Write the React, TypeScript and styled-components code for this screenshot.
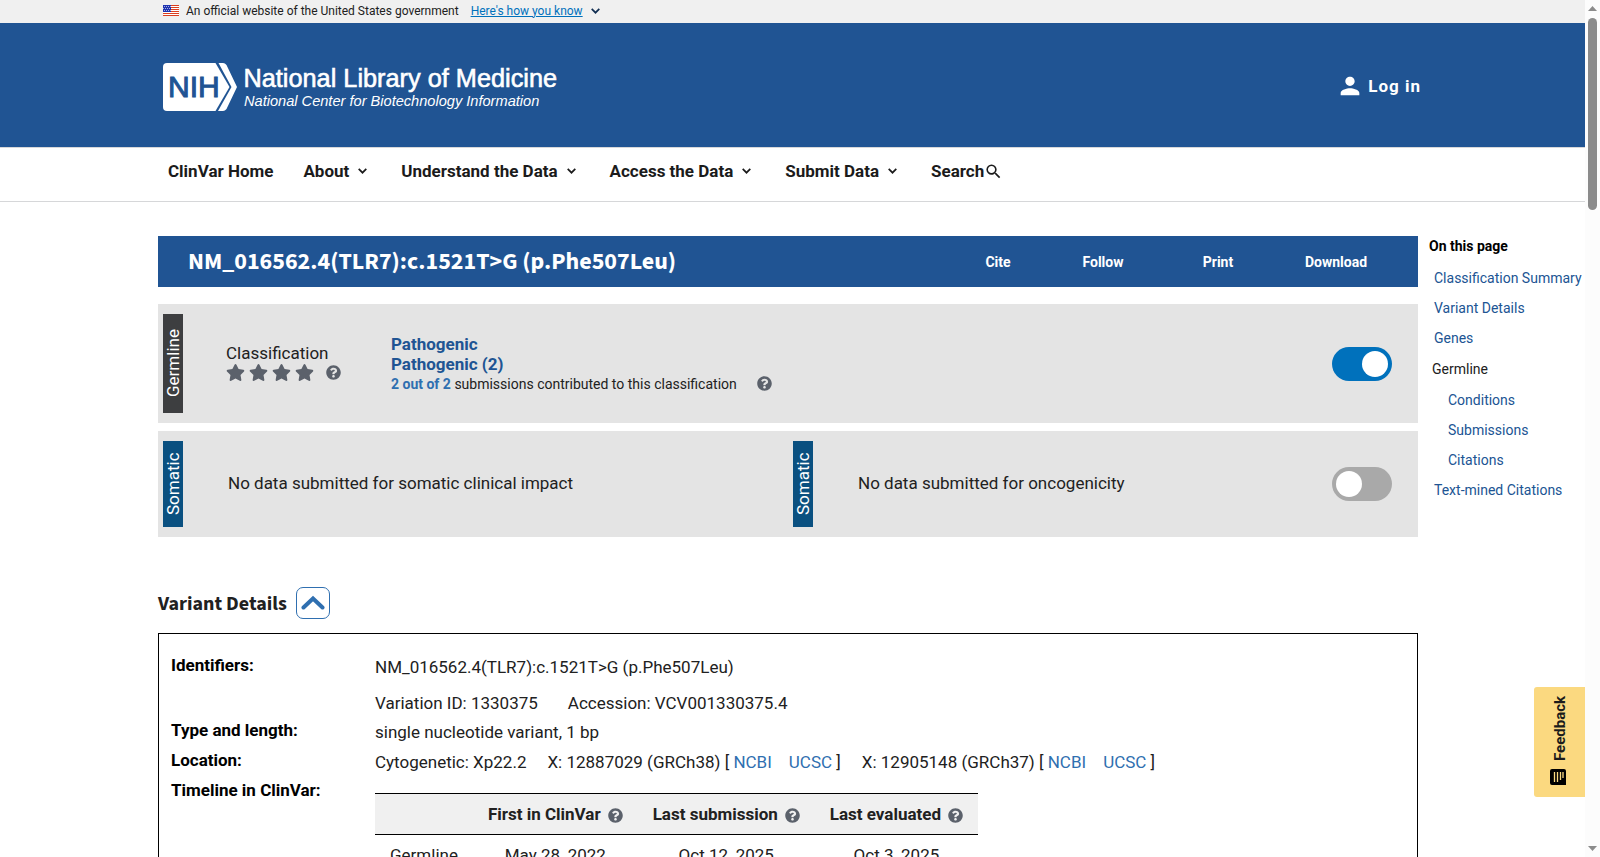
import React from "react";
import styled, { createGlobalStyle, css } from "styled-components";
import { FaQuestionCircle, FaStar } from "react-icons/fa";
import { MdPerson, MdSearch } from "react-icons/md";

const GlobalStyle = createGlobalStyle`
  * { box-sizing: border-box; }
  body {
    margin: 0;
    background: #fff;
    color: #212121;
    font-family: Roboto, "Liberation Sans", sans-serif;
    font-size: 17px;
    line-height: 20px;
  }
  a { text-decoration: none; }
  button { font: inherit; cursor: pointer; }
  svg { flex: none; }
`;

const headingFont = css`
  font-family: "Source Sans 3", "Noto Sans CJK SC", "Noto Sans", sans-serif;
  font-weight: 700;
`;

/* ---------- Shell ---------- */

const Shell = styled.div`
  display: flex;
  height: 100vh;
  overflow: hidden;
`;

const Page = styled.div`
  position: relative;
  flex: 1;
  min-width: 0;
  overflow: hidden;
`;

const ScrollTrack = styled.div`
  flex: none;
  width: 15px;
  padding: 6px 3px;
  display: flex;
  flex-direction: column;
  align-items: center;
  background: #fcfcfc;
`;

const ScrollThumb = styled.div`
  width: 9px;
  height: 192px;
  margin-top: 7px;
  margin-bottom: auto;
  border-radius: 5px;
  background: #8b8b8b;
`;

/* ---------- Government banner ---------- */

const GovBanner = styled.div`
  display: flex;
  align-items: center;
  height: 23px;
  padding: 0 0 2px 163px;
  background: #f0f0f0;
  font-size: 12px;
  line-height: 16px;
`;

const GovText = styled.span`
  margin: 0 12px 0 7px;
`;

const GovToggle = styled.button`
  display: flex;
  align-items: center;
  gap: 8px;
  padding: 0;
  border: 0;
  background: none;
  color: #0071bc;
  & > span { text-decoration: underline; }
  & > svg { color: #112e51; }
`;

/* ---------- Header ---------- */

const Header = styled.header`
  display: flex;
  align-items: center;
  justify-content: space-between;
  height: 124px;
  padding: 4px 164px 0 163px;
  background: #205493;
`;

const LogoLink = styled.a`
  display: block;
  height: 48px;
`;

const LogIn = styled.a`
  display: flex;
  align-items: center;
  gap: 4px;
  padding-bottom: 2px;
  color: #fff;
  font-size: 17px;
  font-weight: 700;
  letter-spacing: 1px;
`;

const Nav = styled.nav`
  display: flex;
  align-items: flex-start;
  gap: 34px;
  height: 55px;
  padding: 13px 0 0 168px;
  border-top: 1px solid #d6d7d9;
  border-bottom: 1px solid #d6d7d9;
`;

const NavLink = styled.a<{ $tight?: boolean }>`
  display: flex;
  align-items: center;
  gap: ${(p) => (p.$tight ? 0 : 9)}px;
  color: #1b1b1b;
  font-size: 17px;
  font-weight: 700;
  line-height: 20px;
  &:first-child { margin-right: -4px; }
`;

/* ---------- Body ---------- */

const Body = styled.div`
  display: grid;
  grid-template-columns: minmax(0, 1fr) 167px;
  padding: 34px 0 0 158px;
`;

const Main = styled.main`
  min-width: 0;
`;

const TitleBar = styled.div`
  display: flex;
  align-items: center;
  justify-content: space-between;
  height: 51px;
  padding: 1px 24px 0 30px;
  background: #205493;
  color: #fff;
`;

const Title = styled.h1`
  ${headingFont}
  margin: 0;
  font-size: 24px;
  line-height: 32px;
`;

const Actions = styled.div`
  display: grid;
  grid-template-columns: 100px 110px 120px 116px;
`;

const Action = styled.button`
  padding: 0;
  border: 0;
  background: none;
  color: #fff;
  font-size: 14px;
  font-weight: 700;
`;

const Card = styled.section<{ $height: number; $top: number }>`
  display: flex;
  align-items: center;
  justify-content: space-between;
  min-height: ${(p) => p.$height}px;
  margin-top: ${(p) => p.$top}px;
  padding: 10px 26px 10px 5px;
  background: #e4e4e4;
`;

const Tag = styled.div<{ $kind: "germline" | "somatic" }>`
  flex: none;
  align-self: stretch;
  display: flex;
  align-items: center;
  justify-content: center;
  width: 20px;
  background: ${(p) => (p.$kind === "germline" ? "#3d3e40" : "#0a5080")};
  color: #fff;
  font-size: 17px;
  writing-mode: vertical-rl;
  transform: rotate(180deg);
`;

const CardContent = styled.div`
  flex: 1;
  align-self: stretch;
  display: flex;
  align-items: center;
`;

const Halves = styled.div`
  flex: 1;
  align-self: stretch;
  display: grid;
  grid-template-columns: 630px 1fr;
`;

const Half = styled.div`
  display: flex;
  align-items: center;
`;

const NoData = styled.span`
  margin-left: 45px;
  padding-bottom: 2px;
`;

const Rating = styled.div`
  width: 165px;
  margin-left: 43px;
  padding-bottom: 2px;
`;

const Stars = styled.div`
  display: flex;
  align-items: center;
  gap: 4px;
  height: 20px;
  color: #5b616b;
`;

const Help = styled.button<{ $gap: number }>`
  flex: none;
  display: inline-flex;
  padding: 0;
  margin-left: ${(p) => p.$gap}px;
  border: 0;
  background: none;
  color: #5b616b;
  vertical-align: middle;
`;

const Verdict = styled.div`
  display: flex;
  flex-direction: column;
  align-items: flex-start;
  a { color: #205493; font-weight: 700; }
`;

const Contribution = styled.div`
  display: flex;
  align-items: center;
  font-size: 14px;
  white-space: pre;
  && a { color: #2f6fb0; }
`;

const Switch = styled.input`
  appearance: none;
  flex: none;
  display: flex;
  width: 60px;
  height: 34px;
  margin: 0;
  padding: 4px;
  border-radius: 17px;
  background: #a9a9a9;
  cursor: pointer;
  &::before {
    content: "";
    width: 26px;
    height: 26px;
    border-radius: 50%;
    background: #fff;
  }
  &:checked {
    justify-content: flex-end;
    background: #0071bc;
  }
`;

/* ---------- Variant details ---------- */

const SectionHead = styled.div`
  display: flex;
  align-items: center;
  gap: 9px;
  margin: 50px 0 14px;
`;

const SectionTitle = styled.h2`
  ${headingFont}
  margin: 0;
  padding-top: 2px;
  font-size: 20px;
  line-height: 30px;
`;

const Collapse = styled.button`
  display: flex;
  align-items: center;
  justify-content: center;
  width: 34px;
  height: 32px;
  padding: 0 0 3px;
  border: 1px solid #2f6fb0;
  border-radius: 7px;
  background: #fff;
  color: #2f6fb0;
`;

const Details = styled.dl`
  display: grid;
  grid-template-columns: 204px minmax(0, 1fr);
  margin: 0;
  padding: 16px 12px;
  border: 1px solid #000;
`;

const Term = styled.dt`
  color: #000;
  font-weight: 700;
  line-height: 30px;
`;

const Value = styled.dd`
  display: flex;
  gap: 21px;
  margin: 0;
  padding-top: 4px;
  line-height: 26px;
  white-space: pre;
  a { color: #2f6fb0; }
`;

const IdentifierValue = styled(Value)`
  flex-direction: column;
  gap: 12px;
  padding-top: 5px;
  line-height: 24px;
`;

const Ids = styled.div`
  display: flex;
  gap: 30px;
`;

const Genomic = styled.span`
  a + a { margin-left: 17px; }
`;

const TimelineValue = styled.dd`
  margin: 0;
  padding-top: 18px;
`;

const Timeline = styled.table`
  border-collapse: collapse;
  text-align: center;
  th, td { padding: 10px 15px; white-space: nowrap; }
  thead tr { background: #f0f0f0; border-top: 1px solid #000; border-bottom: 1px solid #000; }
  tbody th { font-weight: 400; text-align: left; }
`;

/* ---------- Side navigation ---------- */

const Side = styled.aside`
  padding-left: 11px;
  font-size: 14px;
  white-space: nowrap;
`;

const SideTitle = styled.h2`
  margin: 0 0 6px;
  color: #000;
  font-size: 14px;
  font-weight: 700;
  line-height: 21px;
`;

const SideList = styled.ul`
  list-style: none;
  margin: 0;
  padding: 0;
`;

const SideItem = styled.li<{ $indent: number; $group?: boolean }>`
  padding-left: ${(p) => p.$indent}px;
  line-height: ${(p) => (p.$group ? 32 : 30)}px;
  a { color: #205493; }
`;

/* ---------- Feedback tab ---------- */

const Feedback = styled.button`
  position: absolute;
  right: 0;
  bottom: 60px;
  display: flex;
  align-items: center;
  justify-content: center;
  gap: 7px;
  width: 51px;
  height: 110px;
  padding: 0;
  border: 0;
  border-radius: 0 3px 3px 0;
  background: #fbd980;
  color: #1b1b1b;
  font-size: 15px;
  font-weight: 700;
  writing-mode: vertical-rl;
  transform: rotate(180deg);
`;

/* ---------- Drawings ---------- */

const Flag = () => (
  <svg width="16" height="11" viewBox="0 0 16 11" aria-hidden="true">
    <rect width="16" height="11" fill="#fff" />
    {[0, 2, 4, 6, 8, 10].map((y) => (
      <rect key={y} y={y} width="16" height="1" fill="#db3e1f" />
    ))}
    <rect width="8" height="7" fill="#1e33b1" />
    {[1, 3, 5].map((y) =>
      [1, 3, 5, 7].map((x) => (
        <rect key={`${x}-${y}`} x={x - (y === 3 ? 1 : 0)} y={y} width="1" height="1" fill="#a5ade0" />
      ))
    )}
  </svg>
);

const Logo = () => (
  <svg width="400" height="48" viewBox="0 0 400 48" role="img" aria-label="National Library of Medicine">
    <path d="M4 0H52.500L66.500 24L52.500 48H4Q0 48 0 44V4Q0 0 4 0Z" fill="#fff" />
    <path d="M55.500 0H60Q62 0 63.500 2L74 24L63.500 46Q62 48 60 48H55L68.500 24Z" fill="#fff" />
    <g fontFamily='"Liberation Sans", sans-serif'>
      <text x="5" y="34" fontSize="30" fill="#205493" stroke="#205493" strokeWidth="1">NIH</text>
      <g fill="#fff">
        <text x="80.500" y="24" fontSize="25.3" stroke="#fff" strokeWidth="0.6">National Library of Medicine</text>
        <text x="81" y="43" fontSize="14.6" fontStyle="italic">National Center for Biotechnology Information</text>
      </g>
    </g>
  </svg>
);

const ChevronDown = () => (
  <svg width="9" height="6" viewBox="0 0 9 6" fill="none" stroke="currentColor" strokeWidth="1.700" aria-hidden="true">
    <path d="M0.700 0.900L4.500 4.700L8.300 0.900" />
  </svg>
);

const ChevronUp = () => (
  <svg width="24" height="16" viewBox="0 0 24 16" fill="none" stroke="currentColor" strokeWidth="4" aria-hidden="true">
    <path d="M2.500 13.500L12 4.500L21.500 13.500" strokeLinecap="round" />
  </svg>
);

/* Drawn on its side: the button that holds it is turned by half a circle. */
const CommentIcon = () => (
  <svg width="19" height="20" viewBox="0 0 19 20" aria-hidden="true">
    <path d="M0 0L3 3H17Q19 3 19 5V17Q19 19 17 19H5Q3 19 3 17V3Z" fill="#000" />
    <path d="M14.500 6V16M11.500 6V16M8.500 8V16M6 10V16" stroke="#fbd980" strokeWidth="1.300" />
  </svg>
);

const ArrowUp = () => (
  <svg width="9" height="5" viewBox="0 0 9 5" aria-hidden="true"><path d="M0 5L4.500 0L9 5Z" fill="#8b8b8b" /></svg>
);
const ArrowDown = () => (
  <svg width="9" height="5" viewBox="0 0 9 5" aria-hidden="true"><path d="M0 0L4.500 5L9 0Z" fill="#8b8b8b" /></svg>
);

const HelpButton = ({ label, gap }: { label: string; gap: number }) => (
  <Help type="button" aria-label={label} $gap={gap}>
    <FaQuestionCircle size={15} />
  </Help>
);

/* ---------- Data ---------- */

const navItems = ["About", "Understand the Data", "Access the Data", "Submit Data"];

const sideItems = [
  { text: "Classification Summary", indent: 5 },
  { text: "Variant Details", indent: 5 },
  { text: "Genes", indent: 5 },
  { text: "Germline", indent: 3, plain: true },
  { text: "Conditions", indent: 19 },
  { text: "Submissions", indent: 19 },
  { text: "Citations", indent: 19 },
  { text: "Text-mined Citations", indent: 5 },
];

const Assembly = ({ text }: { text: string }) => (
  <Genomic>
    {text} [ <a href="#ncbi">NCBI</a><a href="#ucsc">UCSC</a> ]
  </Genomic>
);

export default function App() {
  return (
    <>
      <GlobalStyle />
      <Shell>
        <Page>
          <GovBanner>
            <Flag />
            <GovText>An official website of the United States government</GovText>
            <GovToggle type="button">
              <span>Here's how you know</span>
              <ChevronDown />
            </GovToggle>
          </GovBanner>
          <Header>
            <LogoLink href="#home"><Logo /></LogoLink>
            <LogIn href="#login"><MdPerson size={28} />Log in</LogIn>
          </Header>
          <Nav>
            <NavLink href="#clinvar">ClinVar Home</NavLink>
            {navItems.map((item) => (
              <NavLink key={item} href="#menu">{item}<ChevronDown /></NavLink>
            ))}
            <NavLink href="#search" $tight>Search<MdSearch size={19} /></NavLink>
          </Nav>

          <Body>
            <Main>
              <TitleBar>
                <Title>NM_016562.4(TLR7):c.1521T&gt;G (p.Phe507Leu)</Title>
                <Actions>
                  <Action type="button">Cite</Action>
                  <Action type="button">Follow</Action>
                  <Action type="button">Print</Action>
                  <Action type="button">Download</Action>
                </Actions>
              </TitleBar>

              <Card $height={119} $top={17}>
                <CardContent>
                  <Tag $kind="germline">Germline</Tag>
                  <Rating>
                    <div>Classification</div>
                    <Stars>
                      {[0, 1, 2, 3].map((n) => <FaStar key={n} size={19} />)}
                      <HelpButton label="About the review status" gap={8} />
                    </Stars>
                  </Rating>
                  <Verdict>
                    <a href="#pathogenic">Pathogenic</a>
                    <a href="#pathogenic-list">Pathogenic (2)</a>
                    <Contribution>
                      <a href="#submissions">2 out of 2</a>
                      <span> submissions contributed to this classification</span>
                      <HelpButton label="About contributing submissions" gap={20} />
                    </Contribution>
                  </Verdict>
                </CardContent>
                <Switch type="checkbox" aria-label="Show germline data" defaultChecked />
              </Card>

              <Card $height={106} $top={8}>
                <Halves>
                  <Half>
                    <Tag $kind="somatic">Somatic</Tag>
                    <NoData>No data submitted for somatic clinical impact</NoData>
                  </Half>
                  <Half>
                    <Tag $kind="somatic">Somatic</Tag>
                    <NoData>No data submitted for oncogenicity</NoData>
                  </Half>
                </Halves>
                <Switch type="checkbox" aria-label="Show somatic data" />
              </Card>

              <SectionHead>
                <SectionTitle>Variant Details</SectionTitle>
                <Collapse type="button" aria-label="Collapse variant details"><ChevronUp /></Collapse>
              </SectionHead>

              <Details>
                <Term>Identifiers:</Term>
                <IdentifierValue>
                  <span>NM_016562.4(TLR7):c.1521T&gt;G (p.Phe507Leu)</span>
                  <Ids>
                    <span>Variation ID: 1330375</span>
                    <span>Accession: VCV001330375.4</span>
                  </Ids>
                </IdentifierValue>
                <Term>Type and length:</Term>
                <Value>single nucleotide variant, 1 bp</Value>
                <Term>Location:</Term>
                <Value>
                  <span>Cytogenetic: Xp22.2</span>
                  <Assembly text="X: 12887029 (GRCh38)" />
                  <Assembly text="X: 12905148 (GRCh37)" />
                </Value>
                <Term>Timeline in ClinVar:</Term>
                <TimelineValue>
                  <Timeline>
                    <thead>
                      <tr>
                        <td />
                        <th scope="col">First in ClinVar<HelpButton label="About first in ClinVar" gap={7} /></th>
                        <th scope="col">Last submission<HelpButton label="About last submission" gap={7} /></th>
                        <th scope="col">Last evaluated<HelpButton label="About last evaluated" gap={7} /></th>
                      </tr>
                    </thead>
                    <tbody>
                      <tr>
                        <th scope="row">Germline</th>
                        <td>May 28, 2022</td>
                        <td>Oct 12, 2025</td>
                        <td>Oct 3, 2025</td>
                      </tr>
                    </tbody>
                  </Timeline>
                </TimelineValue>
              </Details>
            </Main>

            <Side>
              <SideTitle>On this page</SideTitle>
              <SideList>
                {sideItems.map((item) => (
                  <SideItem key={item.text} $indent={item.indent} $group={item.plain}>
                    {item.plain ? item.text : <a href="#section">{item.text}</a>}
                  </SideItem>
                ))}
              </SideList>
            </Side>
          </Body>

          <Feedback type="button"><CommentIcon />Feedback</Feedback>
        </Page>
        <ScrollTrack aria-hidden="true">
          <ArrowUp />
          <ScrollThumb />
          <ArrowDown />
        </ScrollTrack>
      </Shell>
    </>
  );
}
